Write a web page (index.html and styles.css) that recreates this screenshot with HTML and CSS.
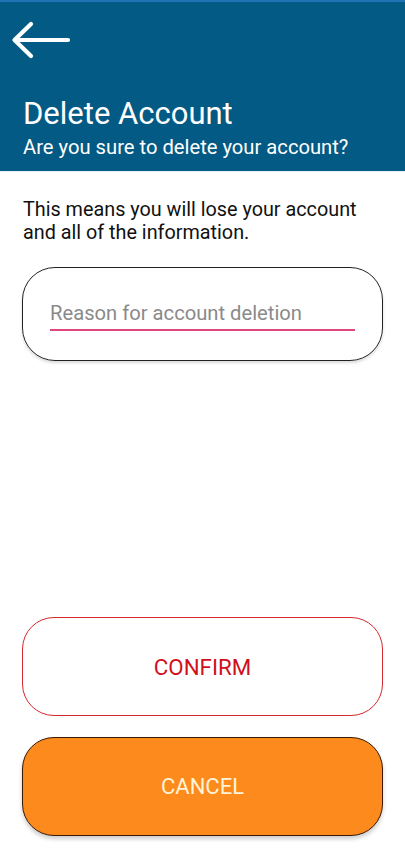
FILE: index.html
```html
<!DOCTYPE html>
<html>
<head>
<meta charset="utf-8">
<link rel="stylesheet" href="styles.css">
</head>
<body>
<div class="screen">
  <header class="header">
    <div class="back">
      <svg width="60" height="42" viewBox="0 0 60 42"><path d="M57 20 H4 M20 4 L3.5 20 L20 36" fill="none" stroke="#fff" stroke-width="4.2" stroke-linecap="round" stroke-linejoin="round"/></svg>
    </div>
    <h1 class="title">Delete Account</h1>
    <p class="subtitle">Are you sure to delete your account?</p>
  </header>
  <main class="content">
    <p class="info">This means you will lose your account and all of the information.</p>
    <div class="field">
      <div class="input">Reason for account deletion</div>
    </div>
    <div class="spacer"></div>
    <div class="btn confirm">CONFIRM</div>
    <div class="btn cancel">CANCEL</div>
  </main>
</div>
</body>
</html>
```
FILE: styles.css
```css
* { box-sizing: border-box; }
html, body { margin: 0; padding: 0; }
body { font-family: Roboto, "Noto Sans", sans-serif; background: #fff; }
.screen { width: 405px; height: 858px; display: flex; flex-direction: column; }
.header {
  background: #035a84;
  border-top: 2px solid #1f74b6;
  height: 172px;
  padding: 18px 0 0 23px;
  color: #fff;
  border-bottom: 1px solid #e6f2f8;
}
.back { margin-left: -12px; height: 42px; }
.back svg { display: block; }
.title { margin: 34px 0 0 0; font-weight: 400; font-size: 31px; line-height: 36px; }
.subtitle { margin: 3px 0 0 0; font-size: 20.2px; line-height: 25px; }
.content { flex: 1; display: flex; flex-direction: column; padding: 26px 22px 22px 22px; }
.info { margin: 0 20px 0 1px; font-size: 19.8px; line-height: 23px; color: #111; }
.field {
  margin-top: 23px;
  height: 94px;
  border: 1.3px solid #222;
  border-radius: 33px;
  padding: 34px 27px 0 27px;
  box-shadow: 0 2px 3px rgba(0,0,0,0.15);
}
.input {
  font-size: 20.2px;
  color: #8a8a8a;
  line-height: 22px;
  padding-bottom: 5px;
  border-bottom: 2px solid #e0457d;
}
.spacer { flex: 1; }
.btn {
  height: 99px;
  border-radius: 32px;
  display: flex; align-items: center; justify-content: center;
  font-size: 22.3px;
}
.confirm { border: 1.3px solid #d4282e; color: #d0101c; background: #fff; }
.cancel { margin-top: 21px; background: #fd8a1c; border: 1.3px solid #3a1a05; color: #fff4d8; box-shadow: 0 3px 4px rgba(0,0,0,0.2); font-size: 22px; }
```
